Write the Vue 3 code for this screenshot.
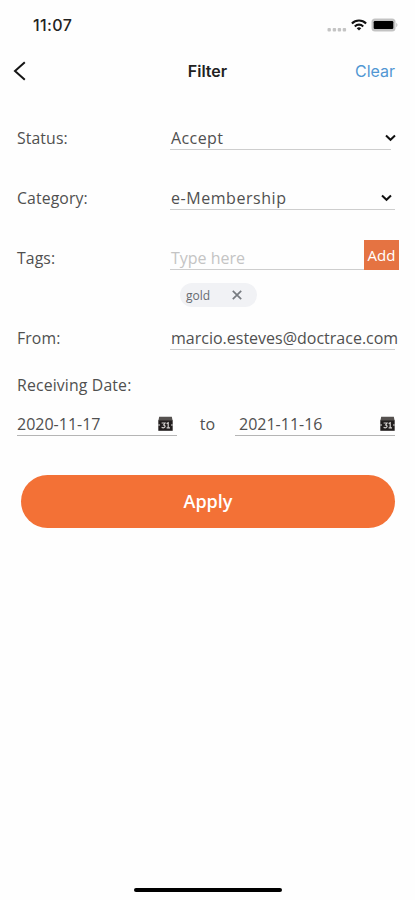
<script setup>
import { ref } from 'vue'

const selects = ref([
  { label: 'Status:', value: 'Accept', cls: 'status' },
  { label: 'Category:', value: 'e-Membership', cls: 'category' },
])
const tags = ref(['gold'])
const from = ref('marcio.esteves@doctrace.com')
const dates = ref(['2020-11-17', '2021-11-16'])
</script>

<template>
  <div class="screen">
    <div class="statusbar">
      <span class="time">11:07</span>
      <svg class="signal" width="20" height="5" viewBox="0 0 20 5" fill="#c4c4c4">
        <rect x="0.5" y="1" width="3.4" height="3.4" rx="1" />
        <rect x="5.7" y="1" width="3.4" height="3.4" rx="1" />
        <rect x="10.7" y="1" width="3.4" height="3.4" rx="1" />
        <rect x="15.7" y="1" width="3.4" height="3.4" rx="1" />
      </svg>
      <svg class="wifi" width="16" height="12" viewBox="0 0 16 12" fill="none" stroke="#111" stroke-width="2.1">
        <path d="M0.9 4.5C4.8 0.5 11.2 0.5 15.1 4.5" />
        <path d="M3.8 7.4C6.2 5 9.8 5 12.2 7.4" />
        <path d="M5.7 9.2Q8 7.3 10.3 9.2L8 11.6Z" fill="#111" stroke="none" />
      </svg>
      <svg class="battery" width="28" height="14" viewBox="0 0 28 14">
        <rect x="0.5" y="0.5" width="24" height="13" rx="3.5" fill="#c3c3c3" />
        <rect x="2.7" y="3" width="19.6" height="8" rx="1.2" fill="#000" />
        <path d="M25.4 4.8Q27.4 7 25.4 9.2Z" fill="#b5b5b5" />
      </svg>
    </div>

    <header class="nav">
      <svg class="back" width="13" height="20" viewBox="0 0 13 20" fill="none" stroke="#151515" stroke-width="2">
        <path d="M11.8 1.2L2 10L11.8 18.8" />
      </svg>
      <h1>Filter</h1>
      <a class="clear">Clear</a>
    </header>

    <main class="form">
      <div v-for="s in selects" :key="s.label" class="row" :class="s.cls">
        <span class="label">{{ s.label }}</span>
        <div class="field">
          <span class="value">{{ s.value }}</span>
          <svg class="chevron" width="11" height="8" viewBox="0 0 11 8" fill="none" stroke="#111" stroke-width="2">
            <path d="M1 1.5L5.5 5.8L10 1.5" />
          </svg>
        </div>
      </div>

      <div class="row tags">
        <span class="label">Tags:</span>
        <div class="field"><span class="placeholder">Type here</span></div>
        <button class="add">Add</button>
      </div>
      <div class="chips">
        <span v-for="t in tags" :key="t" class="chip">
          <span class="chip-text">{{ t }}</span>
          <svg width="10" height="10" viewBox="0 0 10 10" fill="none" stroke="#777b80" stroke-width="1.7">
            <path d="M0.8 0.8L9.2 9.2M9.2 0.8L0.8 9.2" />
          </svg>
        </span>
      </div>

      <div class="row from">
        <span class="label">From:</span>
        <div class="field"><span class="value">{{ from }}</span></div>
      </div>

      <div class="label receiving">Receiving Date:</div>
      <div class="dates">
        <template v-for="(d, i) in dates" :key="d">
          <span v-if="i" class="to">to</span>
          <div class="date" :class="{ end: i }">
            <span>{{ d }}</span>
            <svg width="15" height="16" viewBox="0 0 15 16">
              <path d="M1.2 0.7H13.8L14.7 5H0.3Z" fill="#55514f" />
              <path d="M0.3 4.5H14.7V14.8H0.3Z" fill="#211d1d" />
              <path d="M0.2 9H2M13 9H14.8" stroke="#ddd" stroke-width="1.2" />
              <path d="M3.6 7H7L5.6 9Q7.3 9.3 7 10.8Q6 12.4 3.6 11.4M8.6 7.6L10.2 6.8V11.7M8.6 11.8H12" fill="none" stroke="#d4d1cf" stroke-width="1.2" />
            </svg>
          </div>
        </template>
      </div>

      <button class="apply">Apply</button>
    </main>

    <div class="home"></div>
  </div>
</template>

<style>
body {
  background: #fff;
}
</style>

<style scoped>
.screen {
  width: 415px;
  height: 900px;
  box-sizing: border-box;
  display: flex;
  flex-direction: column;
  background: #fefefe;
  color: #505050;
  font: 400 16px/24px 'Open Sans', sans-serif;
  overflow: hidden;
}
.statusbar {
  height: 50px;
  box-sizing: border-box;
  padding: 0 16px 0 33px;
  display: flex;
  align-items: center;
}
.time {
  font: 500 16px/20px Inter, sans-serif;
  color: #222;
  letter-spacing: 0.4px;
  margin-right: auto;
}
.signal {
  margin: 8px 4px 0 0;
}
.wifi {
  margin-right: 4px;
}
.nav {
  height: 42px;
  padding: 0 20px 0 13px;
  display: grid;
  grid-template-columns: 1fr auto 1fr;
  align-items: center;
}
.nav h1 {
  margin: 0 0 0 7px;
  font: 600 16px/24px Inter, sans-serif;
  color: #222;
}
.clear {
  justify-self: end;
  font: 400 16px/24px Inter, sans-serif;
  color: #5197d3;
}
.form {
  padding: 28px 0 0 17px;
}
.row {
  display: flex;
  height: 30px;
  margin-bottom: 30px;
}
.label {
  width: 153px;
  line-height: 36px;
  font-size: 15.8px;
  letter-spacing: 0.1px;
}
.field {
  width: 225px;
  height: 30px;
  box-sizing: border-box;
  border-bottom: 1.5px solid #cecece;
  display: flex;
  justify-content: space-between;
  line-height: 37px;
  white-space: nowrap;
}
.value {
  margin-left: 1px;
}
.status .field {
  width: 221px;
}
.status .value {
  letter-spacing: 0.4px;
}
.category .value {
  letter-spacing: 0.55px;
}
.chevron {
  flex: none;
  margin: 14px 3px 0 0;
}
.status .chevron {
  margin-right: -5px;
}
.tags {
  margin-bottom: 13px;
}
.tags .field {
  width: 194px;
}
.placeholder {
  margin-left: 1px;
  color: #c4c4c4;
}
.add {
  width: 35px;
  height: 30px;
  padding: 0;
  border: 0;
  background: #e57342;
  color: #fff;
  font: 500 15px/30px 'Open Sans', sans-serif;
}
.chips {
  height: 24px;
  padding-left: 163px;
  display: flex;
  margin-bottom: 13px;
}
.chip {
  width: 77px;
  height: 24px;
  box-sizing: border-box;
  padding: 0 15px 0 6px;
  border-radius: 12px;
  background: #f1f2f5;
  display: flex;
  align-items: center;
  justify-content: space-between;
  font-size: 12px;
  color: #666a70;
}
.chip-text {
  padding-top: 2px;
}
.from {
  margin-bottom: 17px;
}
.receiving {
  width: auto;
  letter-spacing: 0.15px;
}
.dates {
  display: flex;
  height: 33px;
}
.date {
  width: 160px;
  height: 33px;
  box-sizing: border-box;
  padding-right: 4px;
  border-bottom: 1.5px solid #b5b5b5;
  display: flex;
  justify-content: space-between;
  line-height: 42px;
}
.date svg {
  margin-top: 13px;
}
.date.end {
  padding: 0 0 0 4px;
}
.to {
  width: 58px;
  box-sizing: border-box;
  padding-left: 3px;
  text-align: center;
  line-height: 42px;
}
.apply {
  display: block;
  width: 374px;
  height: 53px;
  margin: 39px 0 0 4px;
  padding: 0;
  border: 0;
  border-radius: 27px;
  background: #f37136;
  color: #fff;
  font: 600 18px/53px 'Open Sans', sans-serif;
}
.home {
  width: 148px;
  height: 4px;
  border-radius: 2px;
  background: #000;
  margin: auto 0 8px 134px;
}
</style>
